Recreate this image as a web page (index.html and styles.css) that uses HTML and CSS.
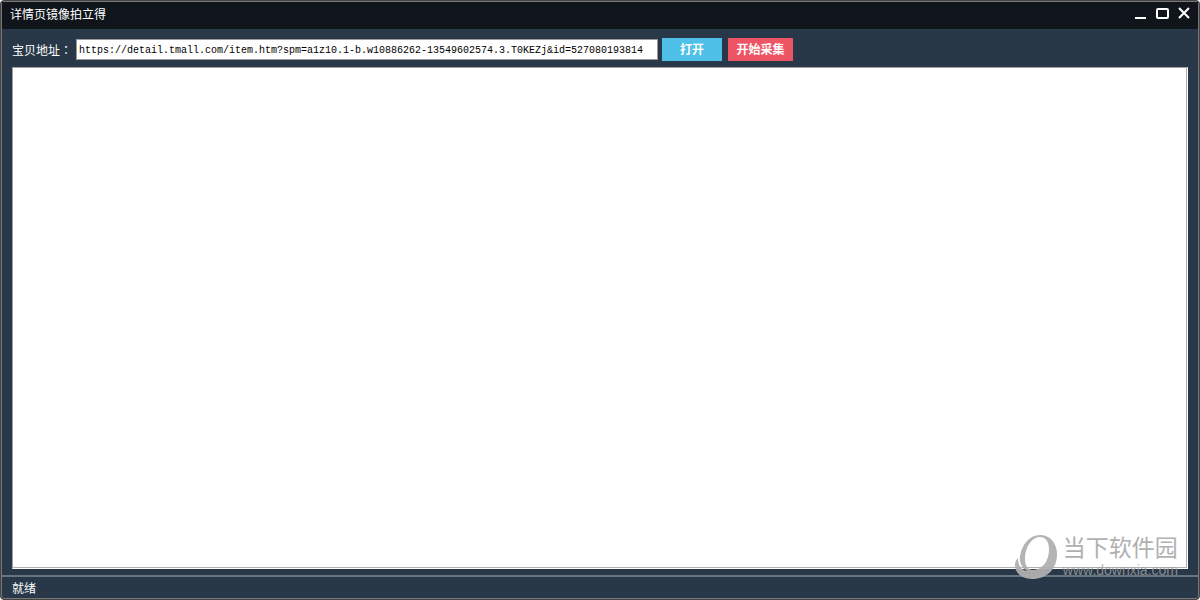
FILE: index.html
```html
<!DOCTYPE html>
<html lang="zh-CN">

<head>
  <meta charset="UTF-8" />
  <meta name="viewport" content="width=device-width, initial-scale=1" />
  <title>详情页镜像拍立得</title>
  <link rel="stylesheet" href="styles.css">
</head>

<body>
  <div class="window">
    <header class="titlebar">
      <h1>详情页镜像拍立得</h1>
      <div class="window-buttons">
        <button type="button" aria-label="最小化">
          <svg width="14" height="14" viewBox="0 0 14 14"><path d="M2 11H13" /></svg>
        </button>
        <button type="button" aria-label="最大化">
          <svg width="14" height="14" viewBox="0 0 14 14"><rect x="2" y="2" width="11" height="9" rx="1" /></svg>
        </button>
        <button type="button" aria-label="关闭">
          <svg width="14" height="14" viewBox="0 0 14 14"><path d="M2 1L12 11M12 1L2 11" /></svg>
        </button>
      </div>
    </header>

    <form class="toolbar">
      <label for="url">宝贝地址<span class="colon" lang="zh-TW">：</span></label>
      <input type="text" id="url" value="https://detail.tmall.com/item.htm?spm=a1z10.1-b.w10886262-13549602574.3.T0KEZj&amp;id=527080193814" />
      <button type="button" class="btn btn-open">打开</button>
      <button type="button" class="btn btn-start">开始采集</button>
    </form>

    <main class="browser-view"></main>

    <footer class="statusbar">就绪</footer>

    <div class="watermark">
      <svg class="watermark-logo" width="44" height="46" viewBox="0 0 44 46">
        <path fill-rule="evenodd" d="M25 0C35 0 42 8 42 19C42 34 32 44 17 44C7 44 0 38 0 30C0 27 1 25 3 23C3 30 6 35 12 36C7 33 4 28 5 21C7 9 15 0 25 0ZM25 2C17 2 10 12 10 24C10 31 13 35 18 35C27 35 34 26 34 15C34 7 31 2 25 2Z" />
      </svg>
      <div class="watermark-text">
        <span class="watermark-name">当下软件园</span>
        <span class="watermark-site">www.downxia.com</span>
      </div>
    </div>
  </div>
</body>

</html>
```

FILE: styles.css
```css
* {
  box-sizing: border-box;
}

body {
  margin: 0;
  background: #fff;
  color: #fff;
  font-family: "Liberation Sans", "Noto Sans CJK SC", sans-serif;
  font-size: 12px;
}

.window {
  position: relative;
  display: flex;
  flex-direction: column;
  height: 100vh;
  border: 1px solid #444;
  border-radius: 4px;
  box-shadow: inset 0 0 0 1px #777;
  background: #283848;
  padding: 1px;
  overflow: hidden;
}

.titlebar {
  display: flex;
  justify-content: space-between;
  align-items: center;
  height: 27px;
  padding: 0 7px 4px 8px;
  background: #10151b;
}

h1 {
  margin: 0;
  font-size: 12px;
  font-weight: 400;
}

.window-buttons {
  display: flex;
  gap: 8px;
}

.window-buttons button {
  display: flex;
  padding: 0;
  border: none;
  background: none;
}

.window-buttons svg {
  fill: none;
  stroke: #fff;
  stroke-width: 2;
}

.toolbar {
  display: flex;
  align-items: center;
  height: 38px;
  padding: 2px 10px 0;
}

.toolbar label {
  width: 64px;
  white-space: nowrap;
}

.colon {
  font-family: "Noto Sans CJK TC", sans-serif;
}

.toolbar input {
  width: 582px;
  height: 21px;
  margin-right: 4px;
  padding: 2px 2px 0;
  border: 1px solid #999;
  background: #fff;
  color: #000;
  font-family: "Liberation Mono", monospace;
  font-size: 10px;
}

.btn {
  height: 23px;
  margin-right: 6px;
  padding: 0 0 2px;
  border: none;
  color: #fff;
  font-family: inherit;
  font-size: 12px;
  font-weight: bold;
}

.btn-open {
  width: 60px;
  background: #4fc1e9;
}

.btn-start {
  width: 65px;
  background: #ed5565;
}

.browser-view {
  flex: 1;
  margin: 0 10px 6px;
  border: 1px solid #a0a0a0;
  border-right-color: #fff;
  border-bottom-color: #fff;
  background: #fff;
  box-shadow: inset -1px -1px #b0b0b0;
}

.statusbar {
  height: 23px;
  padding: 0 10px;
  border-top: 2px solid #687480;
  line-height: 25px;
}

.watermark {
  position: absolute;
  right: 21px;
  bottom: 18px;
  display: flex;
  gap: 4px;
  color: #b0b0b0;
}

.watermark-logo {
  fill: #b0b0b0;
  opacity: 0.95;
}

.watermark-text {
  display: flex;
  flex-direction: column;
}

.watermark-name {
  font-size: 23px;
  font-weight: 400;
  line-height: 26px;
}

.watermark-site {
  color: #a0a0a0;
  font-size: 14px;
  line-height: 18px;
  opacity: 0.8;
}
```
